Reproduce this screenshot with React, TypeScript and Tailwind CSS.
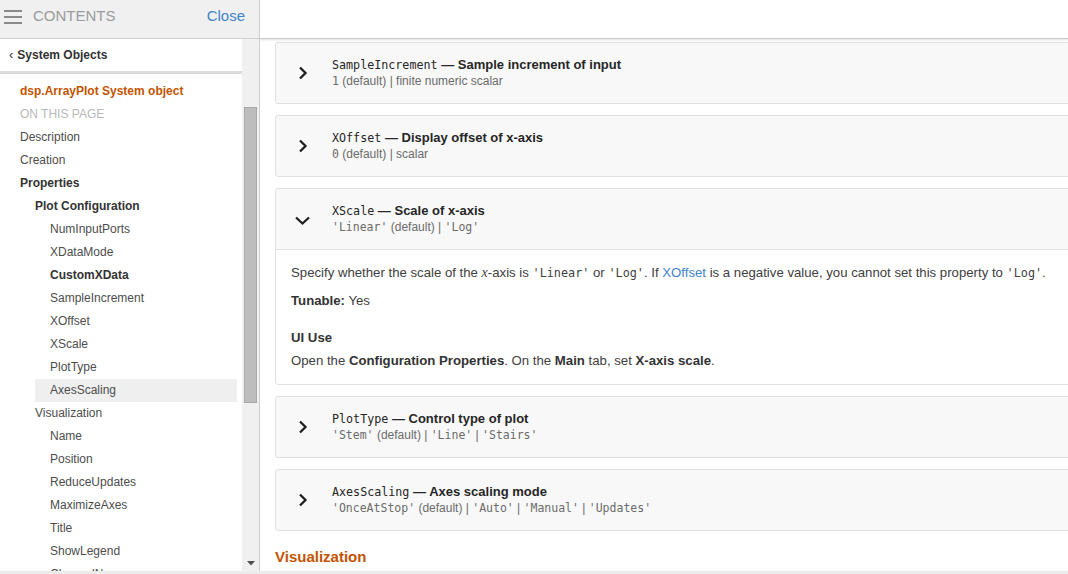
import React from 'react';

type NavItem = { label: string; level: 0 | 1 | 2; bold?: boolean; active?: boolean };

const navItems: NavItem[] = [
  { label: 'Description', level: 0 },
  { label: 'Creation', level: 0 },
  { label: 'Properties', level: 0, bold: true },
  { label: 'Plot Configuration', level: 1, bold: true },
  { label: 'NumInputPorts', level: 2 },
  { label: 'XDataMode', level: 2 },
  { label: 'CustomXData', level: 2, bold: true },
  { label: 'SampleIncrement', level: 2 },
  { label: 'XOffset', level: 2 },
  { label: 'XScale', level: 2 },
  { label: 'PlotType', level: 2 },
  { label: 'AxesScaling', level: 2, active: true },
  { label: 'Visualization', level: 1 },
  { label: 'Name', level: 2 },
  { label: 'Position', level: 2 },
  { label: 'ReduceUpdates', level: 2 },
  { label: 'MaximizeAxes', level: 2 },
  { label: 'Title', level: 2 },
  { label: 'ShowLegend', level: 2 },
  { label: 'ChannelNames', level: 2 },
];

const Mono: React.FC<{ children: React.ReactNode; className?: string }> = ({ children, className = '' }) => (
  <code className={`font-['DejaVu_Sans_Mono',monospace] leading-none ${className || 'text-[11.5px]'}`}>{children}</code>
);

const ChevronRight = () => (
  <svg width="12" height="16" viewBox="0 0 12 16" fill="none">
    <path d="M3 2.5 L8.5 8 L3 13.5" stroke="#1f1f1f" strokeWidth="2.3" />
  </svg>
);

const ChevronDown = () => (
  <svg width="17" height="11" viewBox="0 0 17 11" fill="none">
    <path d="M2 2.5 L8.5 8.5 L15 2.5" stroke="#1f1f1f" strokeWidth="2.3" />
  </svg>
);

const CardHeader: React.FC<{
  name: string;
  title: string;
  sub: React.ReactNode;
  open?: boolean;
}> = ({ name, title, sub, open }) => (
  <div className={`flex items-center pl-[21px] pt-[13px] pb-[13px] ${open ? 'border-b border-[#e2e2e2]' : ''}`}>
    <div className="w-[35px] flex items-center">
      {open ? (
        <span className="-ml-[3px] mt-[3px]"><ChevronDown /></span>
      ) : (
        <ChevronRight />
      )}
    </div>
    <div className="flex flex-col">
      <div className="h-[17px] leading-[17px] whitespace-nowrap text-[13px] text-[#262626]">
        <Mono className="text-[11.7px] text-[#262626]">{name}</Mono>
        <span className="font-bold"> — {title}</span>
      </div>
      <div className="h-[17px] leading-[17px] whitespace-nowrap text-[12px] text-[#6b6b6b]">{sub}</div>
    </div>
  </div>
);

const Card: React.FC<{ children: React.ReactNode }> = ({ children }) => (
  <div className="w-[840px] shrink-0 rounded-[3px] border border-[#e0e0e0] bg-[#f8f8f8]">{children}</div>
);

export default function App() {
  return (
    <div className="w-[1068px] h-[574px] flex flex-col overflow-hidden bg-white font-['Liberation_Sans',Arial,sans-serif]">
      <div className="flex h-[571px]">
        {/* Sidebar */}
        <div className="w-[260px] shrink-0 flex flex-col border-r border-[#cfcfcf]">
          <div className="h-[39px] shrink-0 flex items-center pb-[6px] bg-[#f0f0f0] border-b border-[#d0d0d0]">
            <svg width="19" height="15" viewBox="0 0 19 15" className="ml-[4px] mr-[10px]">
              <rect x="0" y="1" width="18" height="2" fill="#8a8a8a" />
              <rect x="0" y="7" width="18" height="2" fill="#8a8a8a" />
              <rect x="0" y="13" width="18" height="2" fill="#8a8a8a" />
            </svg>
            <span className="text-[15px] text-[#9a9a9a]">CONTENTS</span>
            <span className="ml-auto mr-[14px] text-[15px] text-[#3f83c8]">Close</span>
          </div>
          <div className="flex-1 flex min-h-0">
            <div className="w-[242px] shrink-0 overflow-hidden">
              <div className="h-[32px] flex items-center pl-[9px] text-[12px] font-bold text-[#333]">
                <span className="mr-[4px] text-[13px] font-normal">‹</span>System Objects
              </div>
              <div className="h-[3px] bg-[#dcdcdc]" />
              <div className="pt-[6px] text-[12px] leading-[23px]">
                <div className="pl-[20px] font-bold text-[#c45400]">dsp.ArrayPlot System object</div>
                <div className="pl-[20px] text-[#b8b8b8]">ON THIS PAGE</div>
                {navItems.map((item) => (
                  <div
                    key={item.label}
                    className={`${item.level === 0 ? 'pl-[20px]' : item.level === 1 ? 'pl-[35px]' : 'ml-[35px] mr-[5px] pl-[15px]'} ${item.bold ? 'font-bold text-[#333]' : 'text-[#4d4d4d]'} ${item.active ? 'bg-[#efefef]' : ''}`}
                  >
                    {item.label}
                  </div>
                ))}
              </div>
            </div>
            {/* scrollbar */}
            <div className="w-[17px] shrink-0 bg-[#f0f0f0] flex flex-col items-center">
              <div className="mt-[68px] w-[13px] h-[296px] bg-[#bdbdbd] border border-[#a9a9a9]" />
              <div className="mt-auto mb-[5px]">
                <svg width="8" height="5" viewBox="0 0 8 5"><path d="M0 0 H8 L4 4.5 Z" fill="#505050" /></svg>
              </div>
            </div>
          </div>
        </div>

        {/* Main */}
        <div className="flex-1 min-w-0 flex flex-col overflow-hidden">
          <div className="h-[39px] shrink-0 bg-white border-b border-[#c9c9c9] shadow-[0_1px_2px_rgba(0,0,0,0.12)]" />
          <div className="flex flex-col gap-[11px] pl-[15px] pt-[3px]">
            <Card>
              <CardHeader
                name="SampleIncrement"
                title="Sample increment of input"
                sub={<><Mono>1</Mono> (default) | finite numeric scalar</>}
              />
            </Card>
            <Card>
              <CardHeader
                name="XOffset"
                title="Display offset of x-axis"
                sub={<><Mono>0</Mono> (default) | scalar</>}
              />
            </Card>
            <Card>
              <CardHeader
                open
                name="XScale"
                title="Scale of x-axis"
                sub={<><Mono>'Linear'</Mono> (default) | <Mono>'Log'</Mono></>}
              />
              <div className="bg-white rounded-b-[3px] px-[15px] pt-[13px] pb-[13px] text-[13.2px] leading-[20px] text-[#404040]">
                <p className="h-[20px] whitespace-nowrap">
                  Specify whether the scale of the <i className="font-['Liberation_Serif',serif] text-[14px] leading-none">x</i>-axis is{' '}
                  <Mono className="text-[11.8px]">'Linear'</Mono> or <Mono className="text-[11.8px]">'Log'</Mono>. If{' '}
                  <span className="text-[#3f83c8]">XOffset</span> is a negative value, you cannot set this property to{' '}
                  <Mono className="text-[11.8px]">'Log'</Mono>.
                </p>
                <p className="mt-[8px] h-[20px]"><b className="text-[#333]">Tunable:</b> Yes</p>
                <p className="mt-[17px] h-[20px] font-bold text-[#333]">UI Use</p>
                <p className="mt-[3px] h-[20px] whitespace-nowrap">
                  Open the <b className="text-[#333]">Configuration Properties</b>. On the <b className="text-[#333]">Main</b> tab, set{' '}
                  <b className="text-[#333]">X-axis scale</b>.
                </p>
              </div>
            </Card>
            <Card>
              <CardHeader
                name="PlotType"
                title="Control type of plot"
                sub={<><Mono>'Stem'</Mono> (default) | <Mono>'Line'</Mono> | <Mono>'Stairs'</Mono></>}
              />
            </Card>
            <Card>
              <CardHeader
                name="AxesScaling"
                title="Axes scaling mode"
                sub={<><Mono>'OnceAtStop'</Mono> (default) | <Mono>'Auto'</Mono> | <Mono>'Manual'</Mono> | <Mono>'Updates'</Mono></>}
              />
            </Card>
            <h3 className="mt-[4px] text-[15px] font-bold text-[#c45400]">Visualization</h3>
          </div>
        </div>
      </div>
      <div className="h-[3px] bg-[#ececec]" />
    </div>
  );
}
